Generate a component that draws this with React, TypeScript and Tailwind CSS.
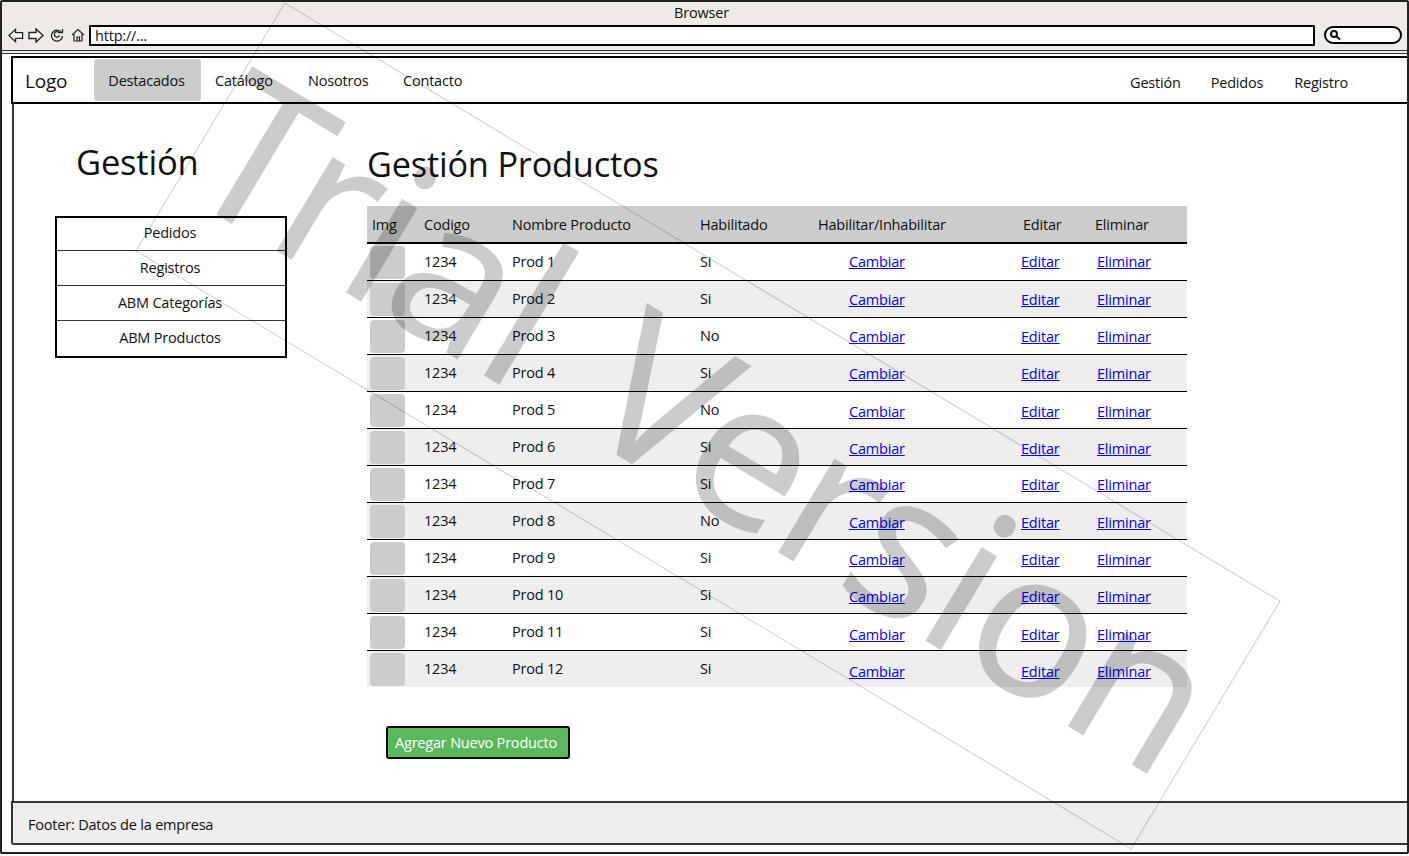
const rows = [
  { name: "Prod 1", on: "Si", link: "pt-0" },
  { name: "Prod 2", on: "Si", link: "pt-[2px]" },
  { name: "Prod 3", on: "No", link: "pt-[2px]" },
  { name: "Prod 4", on: "Si", link: "pt-[2px]" },
  { name: "Prod 5", on: "No", link: "pt-[4px]" },
  { name: "Prod 6", on: "Si", link: "pt-[4px]" },
  { name: "Prod 7", on: "Si", link: "pt-[2px]" },
  { name: "Prod 8", on: "No", link: "pt-[4px]" },
  { name: "Prod 9", on: "Si", link: "pt-[4px]" },
  { name: "Prod 10", on: "Si", link: "pt-[4px]" },
  { name: "Prod 11", on: "Si", link: "pt-[6px]" },
  { name: "Prod 12", on: "Si", link: "pt-[6px]" },
];

const sideItems = [
  { label: "Pedidos", cls: "h-[32px] pb-[2px]" },
  { label: "Registros", cls: "h-[35px] border-t border-[#333]" },
  { label: "ABM Categorías", cls: "h-[35px] border-t border-[#333]" },
  { label: "ABM Productos", cls: "h-[36px] pb-[2px] border-t border-[#333]" },
];

function BrowserIcons() {
  return (
    <div className="flex items-center w-[87px] pl-[6px] shrink-0">
      <svg width="16" height="15" viewBox="0 0 17 15" fill="white" stroke="#222" strokeWidth="1.4">
        <path d="M1 7.5 L8 1 V4.5 H15.5 V10.5 H8 V14 Z" />
      </svg>
      <svg width="16" height="15" viewBox="0 0 16 15" fill="white" stroke="#222" strokeWidth="1.4" className="ml-[4px]">
        <path d="M15 7.5 L8 1 V4.5 H1 V10.5 H8 V14 Z" />
      </svg>
      <svg width="14" height="14" viewBox="0 0 14 14" fill="none" stroke="#222" strokeWidth="1.3" className="ml-[6px]">
        <path d="M11.5 4.5 A5.5 5.5 0 1 0 12.5 8" />
        <path d="M9.5 7.5 A2.7 2.7 0 1 1 9 4.5" />
        <path d="M8 4.7 H12.5 V1" />
      </svg>
      <svg width="14" height="14" viewBox="0 0 14 14" fill="none" stroke="#222" strokeWidth="1.2" className="ml-[7px]">
        <path d="M1 7 L7 1.5 L13 7" />
        <path d="M3 6 V13 H11 V6" />
        <path d="M6 13 V9 H8.5 V13" />
      </svg>
    </div>
  );
}

export default function App() {
  return (
    <div className="relative w-[1409px] h-[856px] overflow-hidden bg-white text-[14.5px] text-[#111] font-['Open_Sans','Noto_Sans',sans-serif] tracking-[-0.2px]">
      <div className="flex flex-col h-[854px] border-2 border-[#222] rounded-[2px]">
        {/* browser chrome */}
        <div className="h-[52px] shrink-0 bg-[#eeebe6] border-b-[4px] border-double border-[#333] flex flex-col">
          <div className="h-[22px] text-center leading-[22px] pr-[6px]">Browser</div>
          <div className="flex items-center h-[22px] pr-[5px]">
            <BrowserIcons />
            <div className="flex-1 h-[21px] bg-white border-2 border-black rounded-[1px] pl-[4px] leading-[17px] text-[#111]">
              http://...
            </div>
            <div className="ml-[9px] w-[78px] h-[18px] bg-white border-2 border-black rounded-full flex items-center pl-[3px]">
              <svg width="12" height="12" viewBox="0 0 12 12" fill="none" stroke="#111" strokeWidth="2">
                <circle cx="5" cy="5" r="3" />
                <path d="M7.5 7.5 L11 10.5" />
              </svg>
            </div>
          </div>
        </div>

        <div className="flex-1 flex flex-col pl-[9px] pt-[2px] min-h-0">
          {/* nav */}
          <div className="h-[48px] shrink-0 border-2 border-r-0 border-black flex items-stretch">
            <div className="w-[81px] pl-[12px] text-[19px] leading-[46px]">Logo</div>
            <div className="w-[107px] pr-[2px] bg-[#cccccc] rounded-[3px] my-[1px] text-center leading-[44px]">Destacados</div>
            <div className="pl-[14px] w-[107px] leading-[46px]">Catálogo</div>
            <div className="w-[95px] leading-[46px]">Nosotros</div>
            <div className="leading-[46px]">Contacto</div>
            <div className="ml-auto flex pr-[59px] leading-[50px]">
              <span className="mr-[30px]">Gestión</span>
              <span className="mr-[31px]">Pedidos</span>
              <span>Registro</span>
            </div>
          </div>

          {/* body */}
          <div className="flex-1 flex border-l-2 border-[#333] ml-[1px] min-h-0">
            <aside className="w-[353px] shrink-0">
              <h2 className="mt-[35px] ml-[62px] text-[34.5px] leading-[46px]">Gestión</h2>
              <div className="mt-[31px] ml-[41px] w-[232px] border-2 border-black">
                {sideItems.map((item) => (
                  <div key={item.label} className={`flex items-center justify-center pr-[2px] ${item.cls}`}>
                    {item.label}
                  </div>
                ))}
              </div>
            </aside>
            <main className="w-[820px] shrink-0">
              <h1 className="mt-[37px] text-[34.3px] leading-[46px] tracking-[-0.2px]">Gestión Productos</h1>
              <table className="mt-[19px] w-[820px] table-fixed border-collapse">
                <thead>
                  <tr className="h-[37px] bg-[#cccccc] border-b-2 border-black text-left">
                    <th className="w-[53px] pl-[5px] pt-[2px] font-normal">Img</th>
                    <th className="w-[92px] pl-[4px] pt-[2px] font-normal">Codigo</th>
                    <th className="w-[188px] pl-0 pt-[2px] font-normal">Nombre Producto</th>
                    <th className="w-[118px] pt-[2px] font-normal">Habilitado</th>
                    <th className="w-[205px] pt-[2px] font-normal">Habilitar/Inhabilitar</th>
                    <th className="w-[72px] pt-[2px] font-normal">Editar</th>
                    <th className="pt-[2px] font-normal">Eliminar</th>
                  </tr>
                </thead>
                <tbody>
                  {rows.map((row, i) => (
                    <tr
                      key={row.name}
                      className={`h-[37px] ${i % 2 === 1 ? "bg-[#eeeeee]" : ""} ${i < 11 ? "border-b border-black" : ""}`}
                    >
                      <td className="pl-[3px] pt-[2px]">
                        <div className="w-[35px] h-[33px] bg-[#cccccc] rounded-[4px]" />
                      </td>
                      <td className="pl-[4px] align-middle">1234</td>
                      <td>{row.name}</td>
                      <td>{row.on}</td>
                      <td className={`pl-[31px] ${row.link}`}>
                        <a href="#" className="text-[#0000ee] underline">Cambiar</a>
                      </td>
                      <td className={row.link}>
                        <a href="#" className="ml-[-2px] text-[#0000ee] underline">Editar</a>
                      </td>
                      <td className={row.link}>
                        <a href="#" className="ml-[2px] text-[#0000ee] underline">Eliminar</a>
                      </td>
                    </tr>
                  ))}
                </tbody>
              </table>
              <button className="block mt-[39px] ml-[19px] w-[184px] h-[33px] pr-[4px] bg-[#5cb85c] border-2 border-black rounded-[3px] text-white">
                Agregar Nuevo Producto
              </button>
            </main>
          </div>

          {/* footer */}
          <div className="h-[44px] shrink-0 bg-[#eeeeee] border-y-2 border-l-2 border-[#333] rounded-bl-[3px] pl-[15px] leading-[44px] mb-[7px]">
            Footer: Datos de la empresa
          </div>
        </div>
      </div>

      {/* trial watermark */}
      <div className="absolute left-[127px] top-[281px] w-[1162px] h-[290px] rotate-[31deg] border border-black/20 flex items-center justify-start pl-[2px] pb-[14px] pointer-events-none">
        <span className="text-[204px] leading-none whitespace-nowrap text-black/20 font-['Noto_Sans',sans-serif] tracking-[-3px] [word-spacing:20px]">
          Trial <span className="tracking-[-5px]">Version</span>
        </span>
      </div>
    </div>
  );
}
